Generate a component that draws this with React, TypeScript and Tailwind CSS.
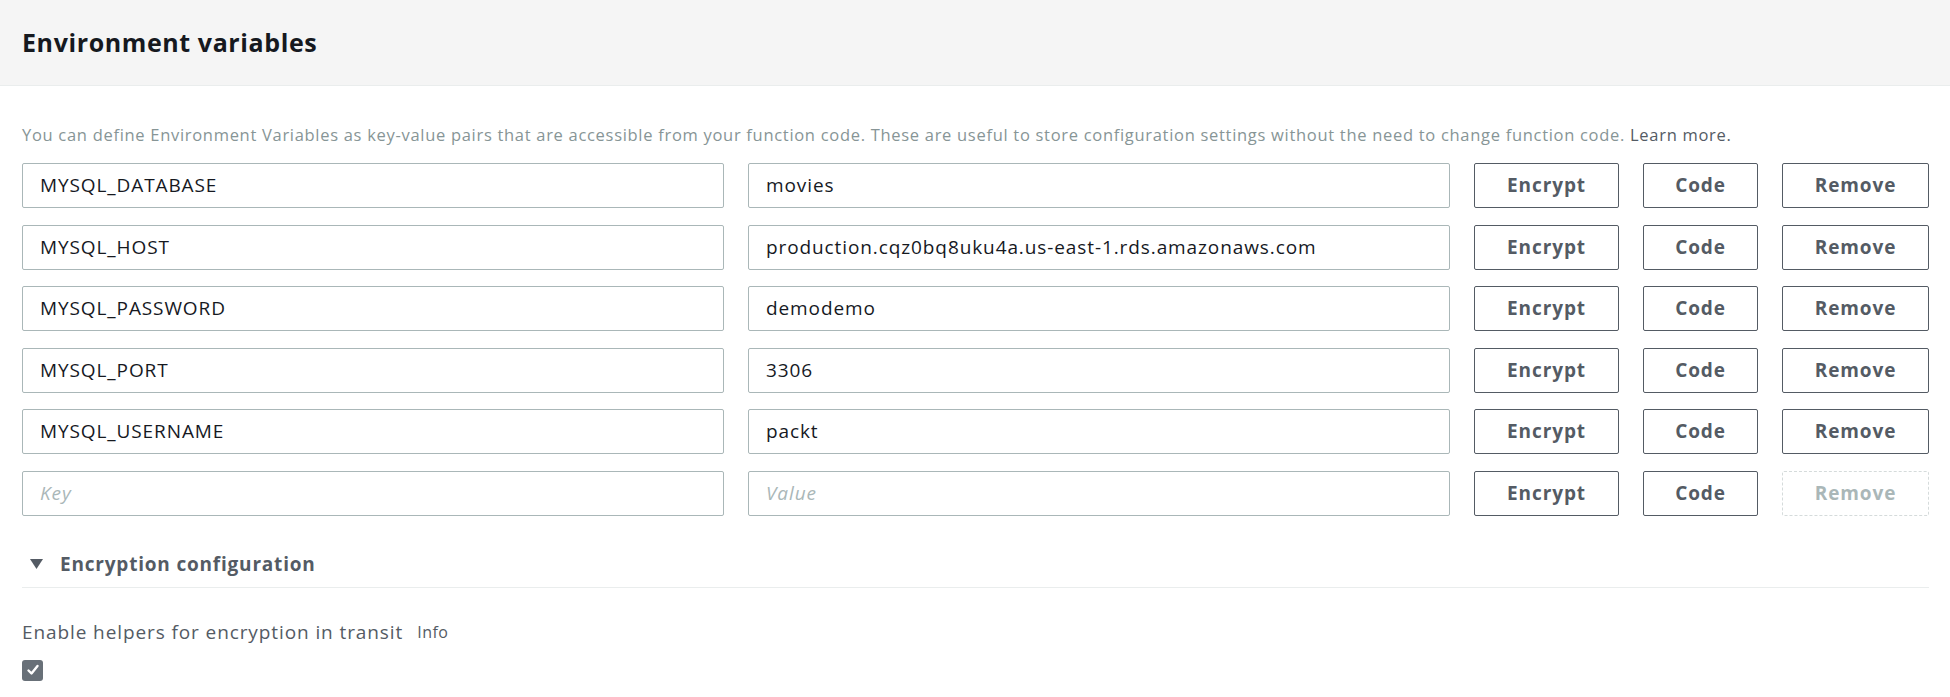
import React from "react";

const rows = [
  { key: "MYSQL_DATABASE", value: "movies" },
  { key: "MYSQL_HOST", value: "production.cqz0bq8uku4a.us-east-1.rds.amazonaws.com" },
  { key: "MYSQL_PASSWORD", value: "demodemo" },
  { key: "MYSQL_PORT", value: "3306" },
  { key: "MYSQL_USERNAME", value: "packt" },
];

const btn =
  "flex h-[45px] items-center justify-center rounded-[2px] border border-[#545b64] bg-white text-[19px] font-bold tracking-[0.9px] text-[#545b64]";

const field =
  "flex h-[45px] flex-1 items-center rounded-[2px] border border-[#aab7b8] px-[17px] text-[19px] tracking-[0.9px]";

const EnvRow: React.FC<{ k?: string; v?: string }> = ({ k, v }) => {
  const empty = k === undefined;
  return (
    <div className="flex gap-6">
      <div className={field}>
        {empty ? (
          <span className="italic text-[#aab7b8]">Key</span>
        ) : (
          <span className="text-[#16191f]">{k}</span>
        )}
      </div>
      <div className={field}>
        {empty ? (
          <span className="italic text-[#aab7b8]">Value</span>
        ) : (
          <span className="text-[#16191f]">{v}</span>
        )}
      </div>
      <button className={`${btn} w-[145px]`}>Encrypt</button>
      <button className={`${btn} w-[115px]`}>Code</button>
      {empty ? (
        <button className="flex h-[45px] w-[147px] items-center justify-center rounded-[2px] border border-dashed border-[#d5dbdb] bg-white text-[19px] font-bold tracking-[0.9px] text-[#aab7b8]">
          Remove
        </button>
      ) : (
        <button className={`${btn} w-[147px]`}>Remove</button>
      )}
    </div>
  );
};

export default function App() {
  return (
    <div className="min-h-[697px] w-[1950px] bg-white font-['Open_Sans',sans-serif]">
      <div className="flex h-[86px] items-center border-b border-[#eaeded] bg-[#f5f5f5] px-[22px]">
        <h2 className="text-[25px] font-bold tracking-[0.6px] text-[#16191f]">Environment variables</h2>
      </div>

      <div className="pl-[22px] pr-[21px]">
        <p className="mt-[39px] text-[16.5px] leading-[20px] tracking-[0.7px] text-[#879596]">
          You can define Environment Variables as key-value pairs that are accessible from your function code. These are
          useful to store configuration settings without the need to change function code.{" "}
          <span className="text-[#545b64]">Learn more.</span>
        </p>

        <div className="mt-[18px] flex flex-col gap-[16.5px]">
          {rows.map((r) => (
            <EnvRow key={r.key} k={r.key} v={r.value} />
          ))}
          <EnvRow />
        </div>

        <div className="mt-[34px] flex items-center gap-[17px] border-b border-[#eaeded] pb-[9px] pl-[8px]">
          <svg width="13" height="10" viewBox="0 0 13 10">
            <path d="M0 0 H13 L6.5 10 Z" fill="#545b64" />
          </svg>
          <span className="text-[19px] font-bold tracking-[0.8px] text-[#545b64]">Encryption configuration</span>
        </div>

        <div className="mt-[30px] flex items-center gap-[14px]">
          <span className="text-[19px] tracking-[0.9px] text-[#545b64]">Enable helpers for encryption in transit</span>
          <span className="text-[16px] tracking-[0.5px] text-[#545b64]">Info</span>
        </div>
        <div className="mt-[13px] flex h-[21px] w-[21px] items-center justify-center rounded-[3px] bg-[#687078]">
          <svg width="14" height="14" viewBox="0 0 14 14" fill="none">
            <path d="M2.5 7.5 L5.5 10.5 L11.5 3" stroke="white" strokeWidth="2.4" strokeLinecap="round" strokeLinejoin="round" />
          </svg>
        </div>
      </div>
    </div>
  );
}
